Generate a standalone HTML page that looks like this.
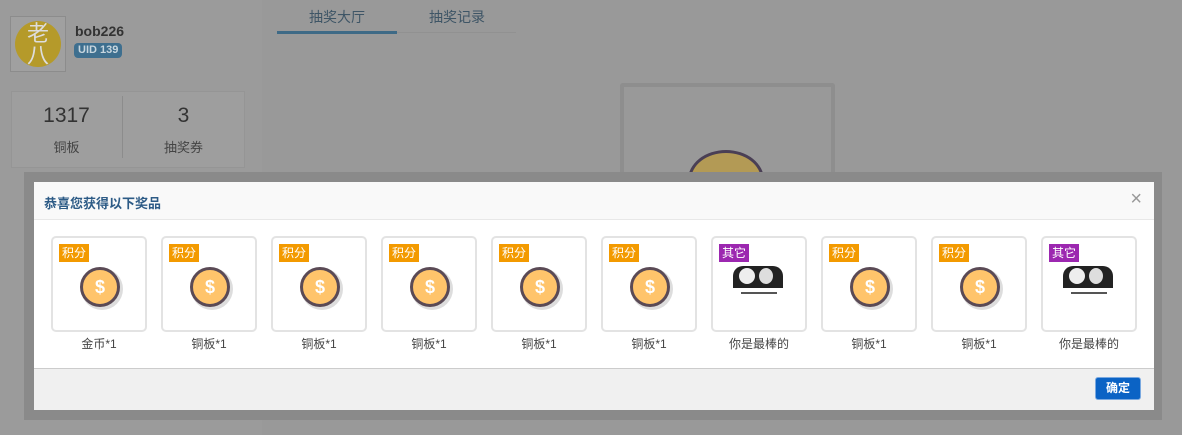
<!DOCTYPE html>
<html><head><meta charset="utf-8"><style>
*{box-sizing:border-box;margin:0;padding:0}
body{width:1182px;height:435px;overflow:hidden;background:#999;font-family:"Liberation Sans","Noto Sans CJK SC",sans-serif;position:relative}
.abs{position:absolute}
.coin{position:absolute;left:27px;top:29px;width:40px;height:40px;border-radius:50%;background:#ffc46b;border:3px solid #5a4a55;box-shadow:2px 2px 0 1px #ddd;color:#fff;font-weight:bold;font-size:18px;text-align:center;line-height:34px}
.item{position:absolute;top:236px;width:96px;height:96px;border:2px solid #e3e3e3;border-radius:5px;background:#fff}
.tag{position:absolute;left:6px;top:6px;height:18px;padding:0 3px;color:#fff;font-size:12px;line-height:18px}
.lbl{position:absolute;top:335px;width:96px;text-align:center;font-size:12px;color:#444}
</style></head><body>
<div class="abs" style="left:0;top:0;width:262px;height:435px;background:#9b9b9b"></div>
<div class="abs" style="left:10px;top:16px;width:56px;height:56px;border:1px solid #8c8c8c;background:#a0a0a0"><div style="margin:4px;width:46px;height:46px;border-radius:50%;background:#b59a2a;color:#ddd;font-size:22px;line-height:22px;text-align:center;padding-top:2px">老<br>八</div></div>
<div class="abs" style="left:75px;top:23px;font-weight:bold;font-size:14px;color:#333">bob226</div>
<div class="abs" style="left:74px;top:43px;background:#3e6f8f;color:#c7d6df;font-size:11px;font-weight:bold;border-radius:4px;padding:1px 4px;line-height:13px">UID 139</div>
<div class="abs" style="left:11px;top:91px;width:234px;height:77px;background:#9e9e9e;border:1px solid #959595"></div>
<div class="abs" style="left:122px;top:96px;width:1px;height:62px;background:#8c8c8c"></div>
<div class="abs" style="left:11px;top:104px;width:111px;text-align:center;font-size:21px;color:#333">1317</div>
<div class="abs" style="left:11px;top:137px;width:111px;text-align:center;font-size:13px;color:#444">铜板</div>
<div class="abs" style="left:128px;top:104px;width:111px;text-align:center;font-size:21px;color:#333">3</div>
<div class="abs" style="left:128px;top:137px;width:111px;text-align:center;font-size:13px;color:#444">抽奖券</div>
<div class="abs" style="left:278px;top:32px;width:238px;height:1px;background:#919191"></div>
<div class="abs" style="left:277px;top:31px;width:120px;height:3px;background:#3e6a86"></div>
<div class="abs" style="left:277px;top:7px;width:120px;text-align:center;font-size:14px;color:#3e5566">抽奖大厅</div>
<div class="abs" style="left:397px;top:7px;width:120px;text-align:center;font-size:14px;color:#3e5566">抽奖记录</div>
<div class="abs" style="left:620px;top:83px;width:215px;height:120px;border:4px solid #8e8e8e;border-bottom:none;border-radius:3px 3px 0 0"></div>
<div class="abs" style="left:688px;top:150px;width:76px;height:60px;border-radius:50%;background:#b39a55;border:3px solid #4a3f55"></div>
<div class="abs" style="left:24px;top:172px;width:1138px;height:248px;background:#8a8a8a"></div>
<div class="abs" style="left:34px;top:182px;width:1120px;height:228px;background:#fff">
 <div style="height:38px;background:#f9f9f9;border-bottom:1px solid #e8e8e8;font-size:13px;font-weight:bold;color:#2d5b86;padding:11px 0 0 10px">恭喜您获得以下奖品</div>
 <div class="abs" style="right:12px;top:6px;font-size:20px;color:#999">×</div>
 <div class="abs" style="left:0;top:186px;width:1120px;height:42px;background:#f0f0f0;border-top:1px solid #ccc"></div>
 <div class="abs" style="left:1061px;top:195px;width:46px;height:23px;background:#0b63c5;border:1px solid #7aa9e0;border-radius:3px;color:#fff;font-size:12px;font-weight:bold;text-align:center;line-height:21px">确定</div>
</div>
<div id="items"></div>
<script>
var L=["金币*1","铜板*1","铜板*1","铜板*1","铜板*1","铜板*1","你是最棒的","铜板*1","铜板*1","你是最棒的"];
var h="";
for(var i=0;i<10;i++){var x=51+i*110;var p=(i==6||i==9);
h+='<div class="item" style="left:'+x+'px">'+(p?'<div class="tag" style="background:#9c27b0">其它</div><div style="position:absolute;left:20px;top:28px;width:50px;height:22px;background:#222;border-radius:10px 10px 0 0"></div><div style="position:absolute;left:26px;top:30px;width:16px;height:16px;border-radius:50%;background:#eee"></div><div style="position:absolute;left:46px;top:30px;width:14px;height:16px;border-radius:50%;background:#ddd"></div><div style="position:absolute;left:28px;top:54px;width:36px;height:2px;background:#555"></div>':'<div class="tag" style="background:#f39a00">积分</div><div class="coin">$</div>')+'</div><div class="lbl" style="left:'+x+'px">'+L[i]+'</div>';}
document.getElementById("items").innerHTML=h;
</script>
</body></html>
